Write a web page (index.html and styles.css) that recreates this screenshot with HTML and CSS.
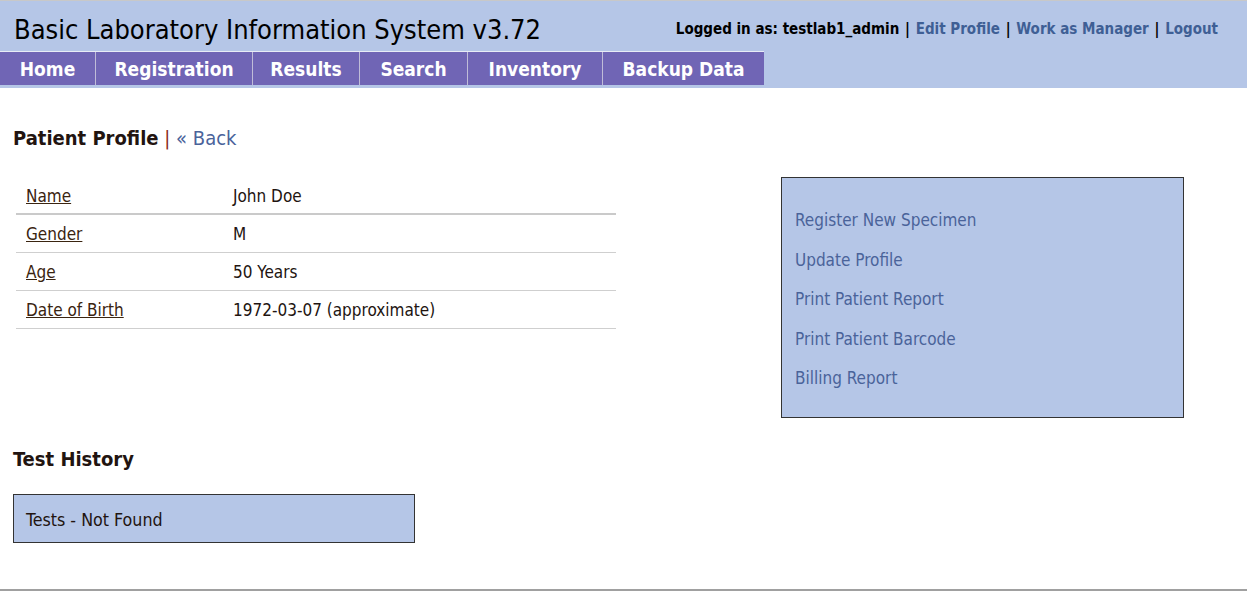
FILE: index.html
```html
<!DOCTYPE html>
<html>
<head>
<meta charset="utf-8">
<title>BLIS</title>
<link rel="stylesheet" href="styles.css">
</head>
<body>
<div class="header">
  <div class="topbar">
    <div class="title">Basic Laboratory Information System v3.72</div>
    <div class="userlinks">Logged in as: testlab1_admin <span class="sep">|</span> <a href="#">Edit Profile</a> <span class="sep">|</span> <a href="#">Work as Manager</a> <span class="sep">|</span> <a href="#">Logout</a></div>
  </div>
  <ul class="nav">
    <li class="nav-home">Home</li>
    <li class="nav-reg">Registration</li>
    <li class="nav-res">Results</li>
    <li class="nav-search">Search</li>
    <li class="nav-inv">Inventory</li>
    <li class="nav-backup">Backup Data</li>
  </ul>
</div>
<div class="content">
  <div class="pagetitle"><b>Patient Profile</b> <span class="pipe">|</span> <a href="#">&laquo; Back</a></div>
  <div class="profile-row">
    <table class="info">
      <tr class="first"><td class="label"><u>Name</u></td><td>John Doe</td></tr>
      <tr><td class="label"><u>Gender</u></td><td>M</td></tr>
      <tr><td class="label"><u>Age</u></td><td>50 Years</td></tr>
      <tr><td class="label"><u>Date of Birth</u></td><td>1972-03-07 (approximate)</td></tr>
    </table>
    <div class="actions">
      <a href="#">Register New Specimen</a>
      <a href="#">Update Profile</a>
      <a href="#">Print Patient Report</a>
      <a href="#">Print Patient Barcode</a>
      <a href="#">Billing Report</a>
    </div>
  </div>
  <div class="subtitle">Test History</div>
  <div class="notfound">Tests - Not Found</div>
</div>
<div class="footer-line"></div>
</body>
</html>
```
FILE: styles.css
```css
html, body {
  margin: 0;
  padding: 0;
  background: #fff;
}
body {
  font-family: "DejaVu Sans Condensed", "DejaVu Sans", sans-serif;
  color: #221410;
  width: 1247px;
  height: 592px;
  position: relative;
  overflow: hidden;
}
a {
  color: #4a639a;
  text-decoration: none;
}
.header {
  background: #b5c6e7;
  border-top: 1px solid #c8c8c8;
  height: 87px;
}
.topbar {
  display: flex;
  justify-content: space-between;
  align-items: flex-start;
  height: 50px;
}
.title {
  font-size: 27px;
  color: #000;
  padding: 13px 0 0 14px;
}
.userlinks {
  font-size: 15px;
  font-weight: bold;
  color: #000;
  padding: 19px 29px 0 0;
}
.userlinks .sep {
  margin: 0 1px;
}
.userlinks a {
  color: #3f5f95;
}
.nav {
  list-style: none;
  margin: 0;
  padding: 0;
  display: flex;
  border-top: 1px solid #e8ecf6;
  width: 764px;
  height: 33px;
  background: #7065b5;
}
.nav li {
  color: #fff;
  font-weight: bold;
  font-size: 19px;
  line-height: 34px;
  text-align: center;
  border-right: 1px solid #c0bcd8;
  box-sizing: border-box;
}
.nav-home { width: 96px; }
.nav-reg { width: 157px; }
.nav-res { width: 107px; }
.nav-search { width: 108px; }
.nav-inv { width: 135px; }
.nav-backup { width: 161px; border-right: none !important; }
.content {
  padding: 0 0 0 13px;
}
.pagetitle {
  font-size: 20px;
  margin-top: 37px;
  height: 26px;
  line-height: 26px;
}
.pagetitle b { color: #221410; }
.pipe { color: #8a2a20; font-weight: normal; }
.pagetitle a { color: #4a639a; }
.profile-row {
  display: flex;
  align-items: flex-start;
  margin-top: 26px;
}
.info {
  border-collapse: collapse;
  width: 600px;
  margin-left: 3px;
  font-size: 17px;
}
.info td {
  padding: 9px 0 8px 10px;
  line-height: 20px;
  border-bottom: 1px solid #cfcfcf;
  vertical-align: middle;
}
.info tr.first td {
  border-bottom: 2px solid #cacaca;
  padding-bottom: 7px;
}
.info td.label {
  width: 197px;
}
.info u {
  color: #3a2410;
}
.actions {
  margin-left: 165px;
  margin-top: 0;
  width: 388px;
  height: 202px;
  border: 1px solid #333;
  background: #b5c6e7;
  padding: 32px 0 5px 13px;
  display: flex;
  flex-direction: column;
  gap: 19px;
  font-size: 17px;
}
.actions a {
  line-height: 20.5px;
}
.subtitle {
  font-size: 20px;
  font-weight: bold;
  margin-top: 29px;
  height: 24px;
  line-height: 24px;
}
.notfound {
  margin-top: 23px;
  width: 388px;
  height: 47px;
  line-height: 50px;
  border: 1px solid #333;
  background: #b5c6e7;
  padding-left: 12px;
  font-size: 17.7px;
}
.footer-line {
  position: absolute;
  left: 0;
  right: 0;
  top: 589px;
  height: 2px;
  background: #a0a0a0;
}
```
